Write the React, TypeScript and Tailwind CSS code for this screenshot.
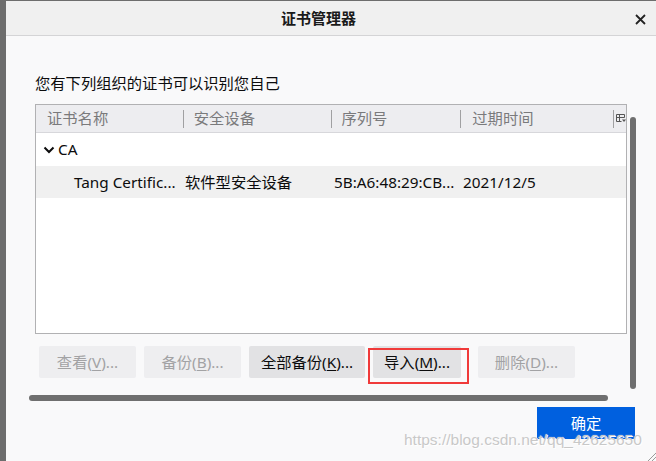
import React from 'react'

const font = { fontFamily: '"Noto Sans", "Noto Sans CJK SC", sans-serif' }

function ColumnPicker() {
  return (
    <svg width="10" height="10" viewBox="0 0 10 10" className="text-[#555]">
      <path d="M0.5 1.5h8M0.5 1.5v7h5M0.5 4.5h8M3.5 1.5v7M8.5 1.5v3" stroke="currentColor" fill="none" strokeWidth="1" />
      <path d="M6 6.5h4L8 9z" fill="currentColor" />
    </svg>
  )
}

function Chevron() {
  return (
    <svg width="12" height="10" viewBox="0 0 12 10">
      <path d="M1.5 2.5l4.5 4.5 4.5-4.5" stroke="#0c0c0d" strokeWidth="2" fill="none" />
    </svg>
  )
}

interface BtnProps {
  label: string
  mnemonic: string
  width: string
  enabled?: boolean
}

function Btn({ label, mnemonic, width, enabled }: BtnProps) {
  return (
    <div
      className={`${width} h-[32px] shrink-0 rounded-[2px] flex items-center justify-center text-[15.3px] ${
        enabled ? 'bg-[#e2e2e4] text-[#0c0c0d]' : 'bg-[#eeeef0] text-[#a2a2a4]'
      }`}
    >
      {label}(<span className="underline underline-offset-2">{mnemonic}</span>)...
    </div>
  )
}

export default function App() {
  return (
    <div className="w-[656px] h-[461px] bg-[#6d6d6d] pl-[6px] pt-[1px] overflow-hidden" style={font}>
      <div className="relative w-full h-full flex flex-col bg-[#f9f9fa]">
        <div className="h-[35px] shrink-0 bg-[#f0f0f0] border-b border-[#d4d4d6] flex items-center relative">
          <span className="ml-[275px] text-[15px] font-bold text-[#1a1a1a]">证书管理器</span>
          <svg width="11" height="11" viewBox="0 0 11 11" className="absolute left-[629px] top-[13px]">
            <path d="M1 1l9 9M10 1l-9 9" stroke="#222" strokeWidth="1.8" />
          </svg>
        </div>

        <div className="pl-[29px] pt-[36px] text-[15.3px] text-[#0c0c0d] leading-[22px]">您有下列组织的证书可以识别您自己</div>

        <div className="ml-[29px] mt-[10px] w-[592px] h-[230px] border border-[#b1b1b3] bg-white flex flex-col">
          <div className="h-[28px] shrink-0 bg-[#ededf0] border-b border-[#d7d7db] flex items-center text-[15.3px] text-[#7a7a7c]">
            <div className="w-[147px] pl-[11px]">证书名称</div>
            <div className="w-px h-[18px] bg-[#a0a0a2]" />
            <div className="w-[147px] pl-[10px]">安全设备</div>
            <div className="w-px h-[18px] bg-[#a0a0a2]" />
            <div className="w-[129px] pl-[10px]">序列号</div>
            <div className="w-px h-[18px] bg-[#a0a0a2]" />
            <div className="w-[152px] pl-[11px]">过期时间</div>
            <div className="w-px h-[18px] bg-[#a0a0a2]" />
            <div className="pl-[2px] pb-[2px]">
              <ColumnPicker />
            </div>
          </div>
          <div className="h-[33px] flex items-center pl-[7px] text-[15.3px] text-[#0c0c0d]">
            <Chevron />
            <span className="ml-[3px]">CA</span>
          </div>
          <div className="h-[32px] bg-[#f0f0f0] flex items-center text-[15.3px] text-[#0c0c0d] whitespace-nowrap">
            <div className="w-[149px] pl-[38px]">Tang Certific...</div>
            <div className="w-[149px]">软件型安全设备</div>
            <div className="w-[129px]">5B:A6:48:29:CB...</div>
            <div>2021/12/5</div>
          </div>
        </div>

        <div className="flex gap-[8px] ml-[33px] mt-[12px]">
          <Btn label="查看" mnemonic="V" width="w-[97px]" />
          <Btn label="备份" mnemonic="B" width="w-[97px]" />
          <Btn label="全部备份" mnemonic="K" width="w-[116px]" enabled />
          <div className="relative w-[97px] shrink-0">
            <Btn label="导入" mnemonic="M" width="w-[88px]" enabled />
            <div className="absolute left-[-5px] top-[2px] w-[101px] h-[36px] border-2 border-[#f03a3a]" />
          </div>
          <Btn label="删除" mnemonic="D" width="w-[97px]" />
        </div>

        <div className="flex justify-end pr-[21px] mt-[29px]">
          <div className="w-[98px] h-[32px] bg-[#0060df] text-white text-[15.3px] flex items-center justify-center">确定</div>
        </div>

        <div className="absolute left-[624px] top-[116px] w-[6px] h-[272px] rounded-full bg-[#6f6f6f]" />
        <div className="absolute left-[23px] top-[394px] w-[579px] h-[6px] rounded-full bg-[#6f6f6f]" />

        <div
          className="absolute left-[398px] top-[430px] text-[15.5px] leading-[18px] text-[#c8c8c8] whitespace-nowrap"
          style={{ fontFamily: '"Liberation Sans", Arial, sans-serif', textShadow: '0 0 1px #fff, 1px 1px 0 #fff' }}
        >
          https://blog.csdn.net/qq_42625650
        </div>

        <svg width="11" height="11" viewBox="0 0 11 11" className="absolute right-0 bottom-0">
          <path d="M11 3L3 11M11 7L7 11" stroke="#9a9a9a" strokeWidth="1" />
        </svg>
      </div>
    </div>
  )
}
